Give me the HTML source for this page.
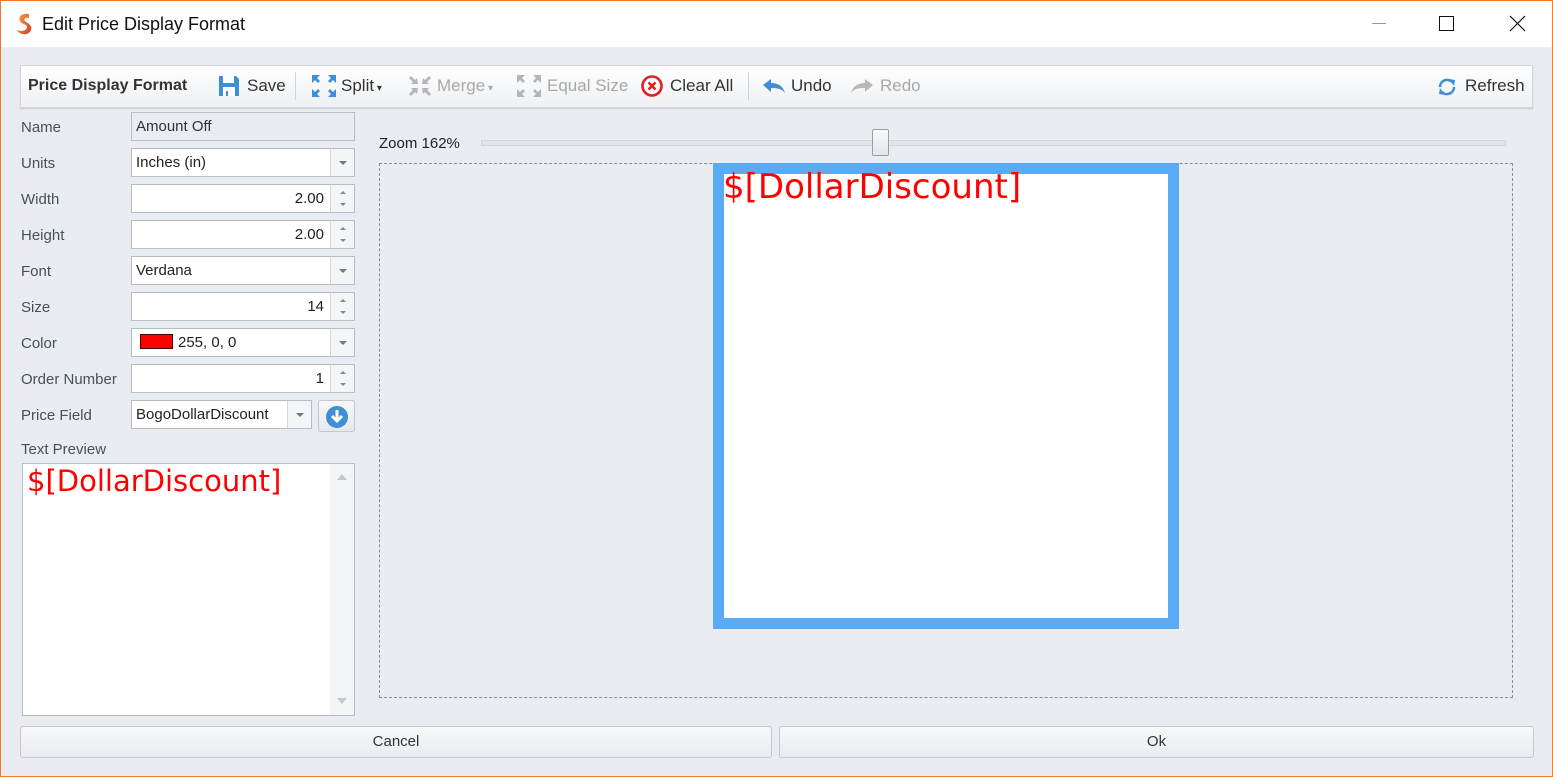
<!DOCTYPE html>
<html><head><meta charset="utf-8"><style>
*{box-sizing:border-box;margin:0;padding:0}
body{width:1553px;height:777px;overflow:hidden;font-family:"Liberation Sans",sans-serif;font-size:15px;color:#333;background:#e9ecf1;position:relative}
.a{position:absolute}
.win{left:0;top:0;width:1553px;height:777px;border:1px solid #f07a2a;}
.title{left:1px;top:1px;width:1551px;height:46px;background:#fff}
.tb{left:20px;top:65px;width:1513px;height:43px;background:linear-gradient(#fff,#eef0f3);border:1px solid #d3d6db;box-shadow:0 1px 1px #c8cbd0}
.tbi{top:76px;font-size:17px;color:#333;white-space:nowrap}
.dis{color:#a8a8a8}
.lbl{left:21px;font-size:15px;color:#4a4f5a}
.inp{left:131px;width:224px;height:29px;background:#fff;border:1px solid #b8bcc3;font-size:15px;color:#222;padding:5px 4px;white-space:nowrap}
.btn{position:absolute;right:0;top:0;width:24px;height:27px;border-left:1px solid #d4d7dc;background:#f4f5f7}
.arr{position:absolute;left:8px;top:12px;border:4px solid transparent;border-top:4px solid #777;border-bottom:0}
.sp1{position:absolute;left:9px;top:6px;border:3px solid transparent;border-bottom:3px solid #888;border-top:0}
.sp2{position:absolute;left:9px;top:18px;border:3px solid transparent;border-top:3px solid #888;border-bottom:0}
.num{text-align:right;padding-right:30px}
.bb{height:32px;border:1px solid #c5c8cd;border-radius:3px;background:linear-gradient(#f7f8fa,#eaecef);text-align:center;line-height:30px;font-size:15px;color:#333}
</style></head><body>
<div class="a win"></div>
<div class="a title"></div>
<svg class="a" style="left:14px;top:12px" width="22" height="24" viewBox="0 0 22 24"><defs><linearGradient id="g" x1="0" y1="0" x2="1" y2="1"><stop offset="0" stop-color="#f6a04a"/><stop offset="1" stop-color="#d6401a"/></linearGradient></defs><path d="M15 2 C8 1 4 4 6 9 C7 12 13 12 13 15 C13 19 7 20 3 18 C5 23 15 24 17 18 C19 13 13 11 11 9 C9 7 12 5 15 6 Z" fill="url(#g)"/></svg>
<div class="a" style="left:42px;top:14px;font-size:18px;color:#111">Edit Price Display Format</div>
<div class="a" style="left:1372px;top:23px;width:14px;height:1px;background:#999"></div>
<div class="a" style="left:1439px;top:16px;width:15px;height:15px;border:1px solid #111"></div>
<svg class="a" style="left:1509px;top:15px" width="17" height="17"><path d="M1 1L16 16M16 1L1 16" stroke="#111" stroke-width="1.2"/></svg>

<div class="a tb"></div>
<div class="a tbi" style="left:28px;font-weight:bold;font-size:16px;top:77px">Price Display Format</div>
<svg class="a" style="left:217px;top:74px" width="24" height="24" viewBox="0 0 24 24"><path d="M2 2h17l3 3v17H2z" fill="#3f8ed6"/><rect x="6" y="2" width="11" height="7" fill="#fff"/><rect x="6" y="13" width="12" height="9" fill="#fff"/><rect x="9" y="17" width="2" height="5" fill="#3f8ed6"/></svg>
<div class="a tbi" style="left:247px">Save</div>
<div class="a" style="left:295px;top:72px;width:1px;height:28px;background:#d0d3d8"></div>
<svg class="a" style="left:311px;top:74px" width="26" height="24" viewBox="0 0 26 24"><g fill="#3f8ed6"><path d="M1 1h8l-3 3 3 3-2 2-3-3-3 3z"/><path d="M25 1h-8l3 3-3 3 2 2 3-3 3 3z"/><path d="M1 23h8l-3-3 3-3-2-2-3 3-3-3z"/><path d="M25 23h-8l3-3-3-3 2-2 3 3 3-3z"/></g></svg>
<div class="a tbi" style="left:341px">Split<span style="font-size:10px"> ▾</span></div>
<svg class="a" style="left:408px;top:74px" width="24" height="24" viewBox="0 0 24 24"><g fill="#b5b5b5"><path d="M10 10H3l2-2-4-4 2-2 4 4 2-2z"/><path d="M14 10h7l-2-2 4-4-2-2-4 4-2-2z"/><path d="M10 14H3l2 2-4 4 2 2 4-4 2 2z"/><path d="M14 14h7l-2 2 4 4-2 2-4-4-2 2z"/></g></svg>
<div class="a tbi dis" style="left:437px">Merge<span style="font-size:10px"> ▾</span></div>
<svg class="a" style="left:516px;top:74px" width="26" height="24" viewBox="0 0 26 24"><g fill="#b5b5b5"><path d="M1 1h8l-3 3 3 3-2 2-3-3-3 3z"/><path d="M25 1h-8l3 3-3 3 2 2 3-3 3 3z"/><path d="M1 23h8l-3-3 3-3-2-2-3 3-3-3z"/><path d="M25 23h-8l3-3-3-3 2-2 3 3 3-3z"/></g></svg>
<div class="a tbi dis" style="left:547px">Equal Size</div>
<svg class="a" style="left:640px;top:74px" width="24" height="24"><circle cx="12" cy="12" r="9.5" fill="#fff" stroke="#e02020" stroke-width="2.6"/><path d="M8.5 8.5l7 7M15.5 8.5l-7 7" stroke="#e02020" stroke-width="2.6"/></svg>
<div class="a tbi" style="left:670px">Clear All</div>
<div class="a" style="left:748px;top:72px;width:1px;height:28px;background:#d0d3d8"></div>
<svg class="a" style="left:762px;top:77px" width="24" height="18" viewBox="0 0 24 18"><path d="M1 8l8-6v4c7 0 12 3 14 10-3-4-7-5-14-5v4z" fill="#3f8ed6"/></svg>
<div class="a tbi" style="left:791px">Undo</div>
<svg class="a" style="left:850px;top:77px" width="24" height="18" viewBox="0 0 24 18"><path d="M23 8l-8-6v4c-7 0-12 3-14 10 3-4 7-5 14-5v4z" fill="#b8b8b8"/></svg>
<div class="a tbi dis" style="left:880px">Redo</div>
<svg class="a" style="left:1436px;top:76px" width="22" height="22" viewBox="0 0 22 22"><path d="M4 11a7 7 0 0 1 12-5" fill="none" stroke="#3f8ed6" stroke-width="2.5"/><path d="M18 11a7 7 0 0 1-12 5" fill="none" stroke="#3f8ed6" stroke-width="2.5"/><path d="M13 3l6 1-1 6z" fill="#3f8ed6"/><path d="M9 19l-6-1 1-6z" fill="#3f8ed6"/></svg>
<div class="a tbi" style="left:1465px">Refresh</div>

<div class="a lbl" style="top:119px">Name</div>
<div class="a inp" style="top:112px;background:#e9ecf1;color:#333">Amount Off</div>
<div class="a lbl" style="top:155px">Units</div>
<div class="a inp" style="top:148px">Inches (in)<div class="btn"><div class="arr"></div></div></div>
<div class="a lbl" style="top:191px">Width</div>
<div class="a inp num" style="top:184px">2.00<div class="btn"><div class="sp1"></div><div class="sp2"></div></div></div>
<div class="a lbl" style="top:227px">Height</div>
<div class="a inp num" style="top:220px">2.00<div class="btn"><div class="sp1"></div><div class="sp2"></div></div></div>
<div class="a lbl" style="top:263px">Font</div>
<div class="a inp" style="top:256px">Verdana<div class="btn"><div class="arr"></div></div></div>
<div class="a lbl" style="top:299px">Size</div>
<div class="a inp num" style="top:292px">14<div class="btn"><div class="sp1"></div><div class="sp2"></div></div></div>
<div class="a lbl" style="top:335px">Color</div>
<div class="a inp" style="top:328px;padding-left:8px"><span style="display:inline-block;width:33px;height:15px;background:#f00;border:1px solid #400;vertical-align:-2px;margin-right:5px"></span>255, 0, 0<div class="btn"><div class="arr"></div></div></div>
<div class="a lbl" style="top:371px">Order Number</div>
<div class="a inp num" style="top:364px">1<div class="btn"><div class="sp1"></div><div class="sp2"></div></div></div>
<div class="a lbl" style="top:407px">Price Field</div>
<div class="a inp" style="top:400px;width:181px">BogoDollarDiscount<div class="btn"><div class="arr"></div></div></div>
<div class="a" style="left:318px;top:400px;width:37px;height:32px;border:1px solid #c5c8cd;border-radius:3px;background:linear-gradient(#f7f8fa,#e6e8eb)"><svg style="position:absolute;left:6px;top:4px" width="24" height="24"><circle cx="12" cy="12" r="11" fill="#3f8ed6"/><path d="M12 5v10M7 11l5 5 5-5" stroke="#fff" stroke-width="3" fill="none"/></svg></div>
<div class="a lbl" style="top:441px">Text Preview</div>
<div class="a" style="left:22px;top:463px;width:333px;height:253px;background:#fff;border:1px solid #b8bcc3"></div>
<div class="a" style="left:330px;top:464px;width:24px;height:251px;background:#f4f5f7"></div>
<div class="a" style="left:337px;top:474px;border:5px solid transparent;border-bottom:6px solid #c8c8c8;border-top:0"></div>
<div class="a" style="left:337px;top:698px;border:5px solid transparent;border-top:6px solid #c8c8c8;border-bottom:0"></div>
<div class="a" style="left:27px;top:464px;font-family:'DejaVu Sans',sans-serif;font-size:29px;color:#f00">$[DollarDiscount]</div>

<div class="a" style="left:379px;top:135px;font-size:15px;color:#222">Zoom 162%</div>
<div class="a" style="left:481px;top:140px;width:1025px;height:6px;background:#e2e4e7;border:1px solid #d2d4d7"></div>
<div class="a" style="left:872px;top:129px;width:17px;height:27px;background:linear-gradient(#fafafa,#e4e6e9);border:1px solid #9a9ea5;border-radius:2px"></div>
<div class="a" style="left:379px;top:163px;width:1134px;height:535px;border:1px dashed #8a8d92"></div>
<div class="a" style="left:713px;top:163px;width:466px;height:466px;background:#fff;border:11px solid #5aabf5"></div>
<div class="a" style="left:723px;top:167px;font-family:'DejaVu Sans',sans-serif;font-size:34px;color:#f00">$[DollarDiscount]</div>

<div class="a bb" style="left:20px;top:726px;width:752px">Cancel</div>
<div class="a bb" style="left:779px;top:726px;width:755px">Ok</div>
</body></html>
